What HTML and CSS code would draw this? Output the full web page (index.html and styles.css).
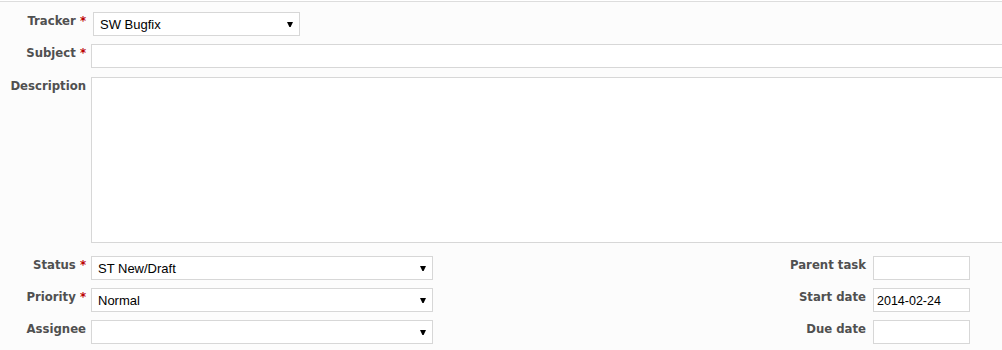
FILE: index.html
```html
<!DOCTYPE html>
<html>
<head>
<meta charset="utf-8">
<link rel="stylesheet" href="styles.css">
</head>
<body>
<div class="box">
  <div class="row">
    <label class="lbl">Tracker <span class="req">*</span></label>
    <div class="select tracker"><span class="val">SW Bugfix</span><span class="arrow"><svg width="6" height="5" viewBox="0 0 6 5"><polygon points="0,0 6,0 3.6,5 2.4,5" fill="#000"/></svg></span></div>
  </div>
  <div class="row">
    <label class="lbl">Subject <span class="req">*</span></label>
    <div class="text wide"></div>
  </div>
  <div class="row desc">
    <label class="lbl">Description</label>
    <div class="textarea wide"></div>
  </div>
  <div class="split">
    <div class="col">
      <div class="row">
        <label class="lbl">Status <span class="req">*</span></label>
        <div class="select mid"><span class="val">ST New/Draft</span><span class="arrow"><svg width="6" height="5" viewBox="0 0 6 5"><polygon points="0,0 6,0 3.6,5 2.4,5" fill="#000"/></svg></span></div>
      </div>
      <div class="row">
        <label class="lbl">Priority <span class="req">*</span></label>
        <div class="select mid"><span class="val">Normal</span><span class="arrow"><svg width="6" height="5" viewBox="0 0 6 5"><polygon points="0,0 6,0 3.6,5 2.4,5" fill="#000"/></svg></span></div>
      </div>
      <div class="row">
        <label class="lbl">Assignee</label>
        <div class="select mid"><span class="val"></span><span class="arrow"><svg width="6" height="5" viewBox="0 0 6 5"><polygon points="0,0 6,0 3.6,5 2.4,5" fill="#000"/></svg></span></div>
      </div>
    </div>
    <div class="col right">
      <div class="row">
        <label class="lbl rlbl">Parent task</label>
        <div class="text small"></div>
      </div>
      <div class="row">
        <label class="lbl rlbl">Start date</label>
        <div class="text small"><span class="val">2014-02-24</span></div>
      </div>
      <div class="row">
        <label class="lbl rlbl">Due date</label>
        <div class="text small"></div>
      </div>
    </div>
  </div>
</div>
</body>
</html>
```
FILE: styles.css
```css
html, body {
  margin: 0;
  padding: 0;
  background: #ffffff;
  overflow: hidden;
}
body {
  width: 1002px;
  height: 350px;
}
.box {
  margin-top: 1px;
  border-top: 1px solid #dddddd;
  background: #fcfcfc;
  width: 1040px;
  height: 360px;
  padding-top: 10px;
  box-sizing: border-box;
}
.row {
  display: flex;
  align-items: flex-start;
  margin-bottom: 8px;
}
.row.desc {
  margin-top: 9px;
  margin-bottom: 13px;
}
.lbl {
  width: 86px;
  flex: none;
  margin-right: 5px;
  padding-top: 1px;
  text-align: right;
  font-family: "DejaVu Sans", Verdana, sans-serif;
  font-weight: bold;
  font-size: 11.7px;
  line-height: 16px;
  color: #505050;
  white-space: nowrap;
}
.req {
  color: #bb0000;
}
.select, .text, .textarea {
  box-sizing: border-box;
  border: 1px solid #d7d7d7;
  background: #ffffff;
  height: 24px;
  font-family: "Liberation Sans", Arial, sans-serif;
  font-size: 13px;
  color: #000;
}
.select {
  display: flex;
  align-items: center;
  justify-content: space-between;
  padding: 1px 6px 0 6px;
}
.select .arrow {
  display: flex;
  margin-top: -1px;
}
.tracker {
  width: 207px;
  margin-left: 2px;
}
.mid {
  width: 342px;
}
.wide {
  flex: 1;
}
.textarea {
  height: 166px;
}
.split {
  display: flex;
  justify-content: space-between;
  width: 970px;
}
.col .row {
  margin-bottom: 8px;
}
.rlbl {
  width: 120px;
  margin-right: 7px;
}
.text.small {
  width: 97px;
  display: flex;
  align-items: center;
  padding: 2px 2px 0 3px;
  font-size: 12.5px;
}
```
